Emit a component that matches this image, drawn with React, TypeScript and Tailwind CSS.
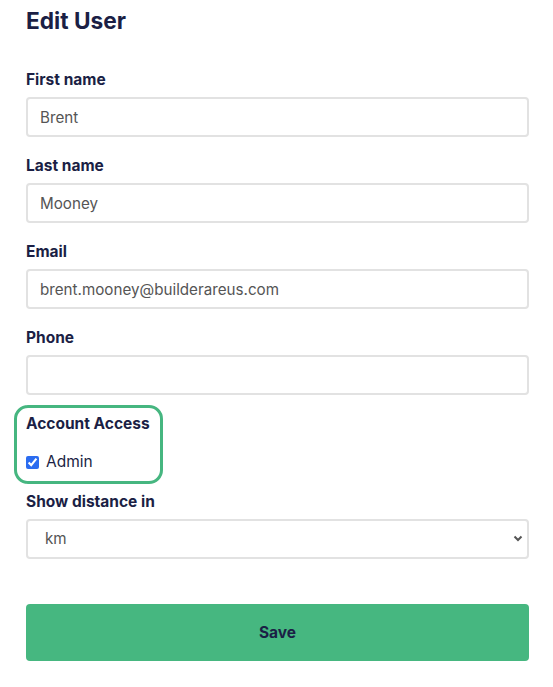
import React from "react";

const labelCls = "block text-[15.5px] leading-[20px] font-bold text-[#1b1f45]";
const inputCls =
  "block w-full h-[40px] rounded-[4px] border-2 border-[#e2e2e2] bg-white px-[12px] text-[15.2px] text-[#555] outline-none";

export default function App() {
  return (
    <div className="min-h-[687px] w-[553px] bg-white pl-[26px] pr-[24px]" style={{ fontFamily: "Inter, 'Noto Sans', sans-serif" }}>
      <h1 className="pt-[7px] text-[22.7px] leading-[28px] font-bold text-[#1b1f45]">Edit User</h1>

      <div className="mt-[35px]">
        <label className={labelCls}>First name</label>
        <input className={`${inputCls} mt-[7px]`} defaultValue="Brent" />
      </div>

      <div className="mt-[19px]">
        <label className={labelCls}>Last name</label>
        <input className={`${inputCls} mt-[7px]`} defaultValue="Mooney" />
      </div>

      <div className="mt-[19px]">
        <label className={labelCls}>Email</label>
        <input className={`${inputCls} mt-[7px]`} defaultValue="brent.mooney@builderareus.com" />
      </div>

      <div className="mt-[19px]">
        <label className={labelCls}>Phone</label>
        <input className={`${inputCls} mt-[7px]`} defaultValue="" />
      </div>

      <div className="-ml-[12px] mt-[10px] w-[149px] h-[79px] rounded-[14px] border-[3px] border-[#46b680] pl-[9px] pt-[6px]">
        <div className={labelCls}>Account Access</div>
        <label className="mt-[18px] flex items-center gap-[7px] text-[15.5px] leading-[20px] text-[#1b1f45]">
          <input type="checkbox" defaultChecked className="m-0 h-[13px] w-[13px] accent-[#2b6cf0]" />
          Admin
        </label>
      </div>

      <div className="mt-[8px]">
        <label className={labelCls}>Show distance in</label>
        <div className="relative mt-[7px]">
          <select className={`${inputCls} appearance-none pl-[17px]`} defaultValue="km">
            <option value="km">km</option>
            <option value="mi">mi</option>
          </select>
          <svg className="pointer-events-none absolute right-[6px] top-[15px]" width="10" height="8" viewBox="0 0 10 8">
            <path d="M1.5 2.5 L5 6 L8.5 2.5" stroke="#555" strokeWidth="2" fill="none" />
          </svg>
        </div>
      </div>

      <button className="mt-[45px] flex h-[57px] w-full items-center justify-center rounded-[4px] bg-[#46b780] text-[15.5px] font-bold text-[#1b1f45]">
        Save
      </button>
    </div>
  );
}
